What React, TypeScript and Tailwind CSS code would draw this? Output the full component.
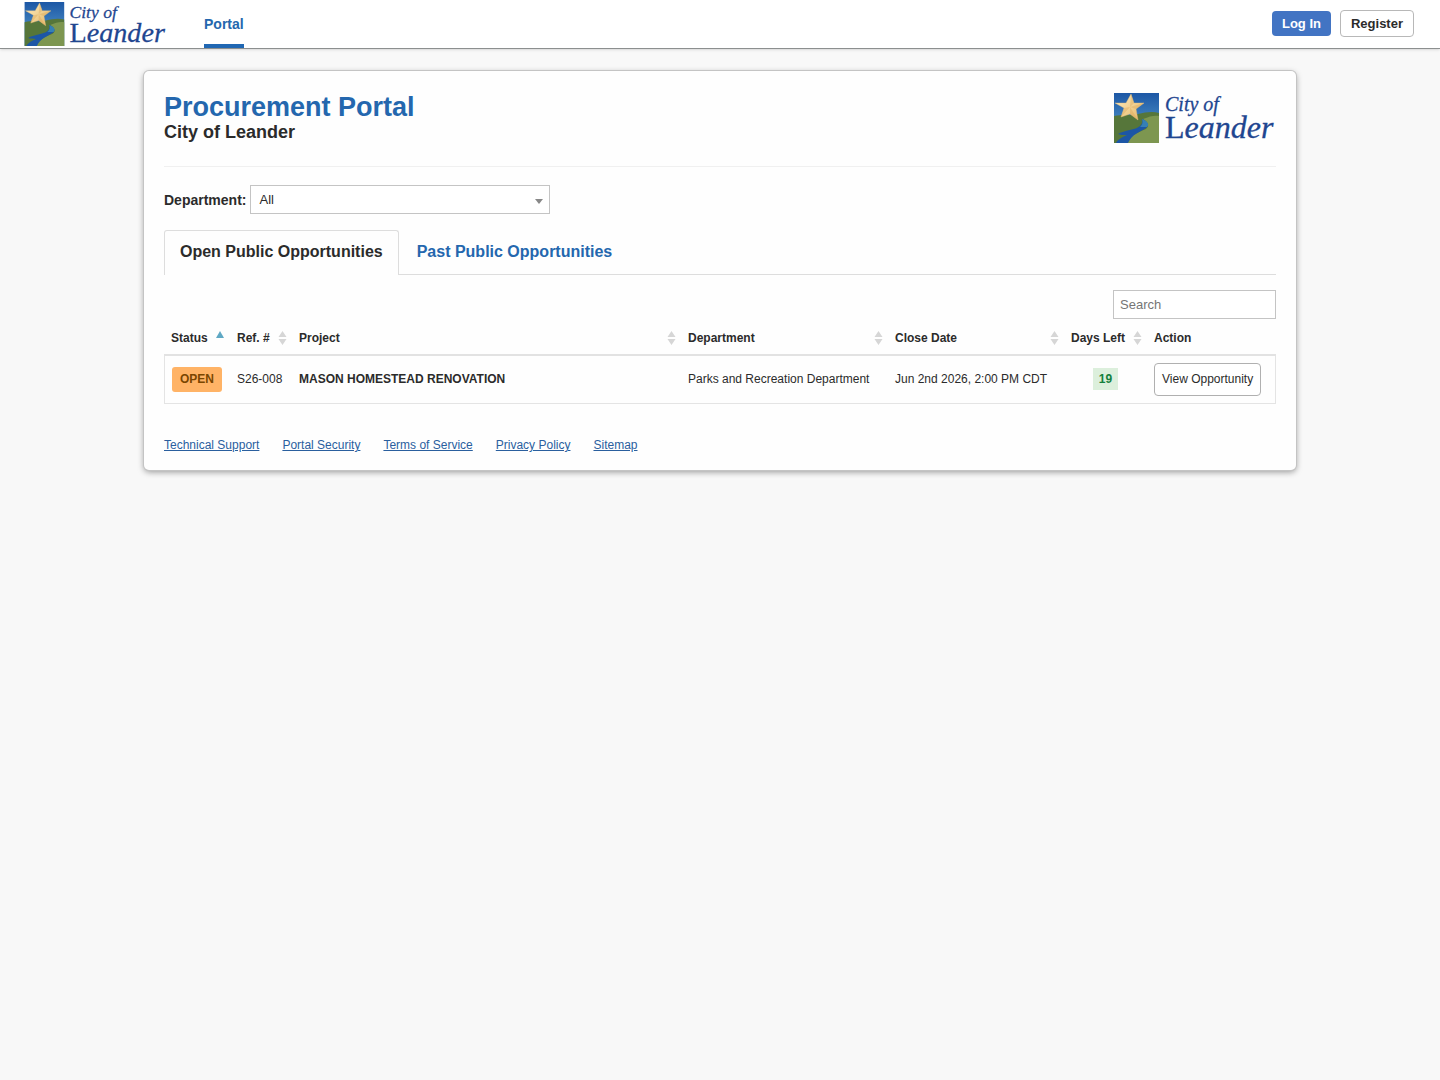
import { useId, useState } from 'react';

const columns = [
  { label: 'Status', width: 'w-[66px]', sort: 'asc' },
  { label: 'Ref. #', width: 'w-[62px]', sort: 'both' },
  { label: 'Project', width: '', sort: 'both' },
  { label: 'Department', width: 'w-[207px]', sort: 'both' },
  { label: 'Close Date', width: 'w-[176px]', sort: 'both' },
  { label: 'Days Left', width: 'w-[83px]', sort: 'both' },
  { label: 'Action', width: 'w-[129px]', sort: 'none' },
];

const opportunities = [
  {
    status: 'OPEN',
    ref: 'S26-008',
    project: 'MASON HOMESTEAD RENOVATION',
    department: 'Parks and Recreation Department',
    closeDate: 'Jun 2nd 2026, 2:00 PM CDT',
    daysLeft: 19,
  },
];

const footerLinks = ['Technical Support', 'Portal Security', 'Terms of Service', 'Privacy Policy', 'Sitemap'];

function Logo({ className }: { className: string }) {
  const id = useId();
  return (
    <svg viewBox="0 0 160 50" className={`overflow-visible ${className}`} role="img" aria-label="City of Leander">
      <defs>
        <linearGradient id={`${id}sky`} x1="0" y1="0" x2="0" y2="1">
          <stop offset="0" stopColor="#1c57a5" />
          <stop offset="0.5" stopColor="#3f80bd" />
        </linearGradient>
        <linearGradient id={`${id}star`} x1="0" y1="0" x2="1" y2="1">
          <stop offset="0" stopColor="#fdeec2" />
          <stop offset="1" stopColor="#e6b565" />
        </linearGradient>
      </defs>
      <rect width="45" height="50" fill={`url(#${id}sky)`} />
      <path d="M0 23 C8 21 16 23 24 21 C32 19 39 18 45 20 V50 H0 Z" fill="#56763a" />
      <path d="M29 26 C36 23 41 22 45 23 V50 H12 C16 43 22 40 32 36 C36 33 34 29 29 26 Z" fill="#7d9650" />
      <path
        d="M28 26 C33 28 36 32 32 35 C26 39 18 41 14 50 H2 C4 46 9 44 13 42 C10 42 6 42 4 41 C10 37 22 37 26 33 C28 31 29 29 28 26 Z"
        fill="#1c56a6"
      />
      <path d="M28 26 C33 28 36 31 33 34 L26 34 C29 31 29 29 28 26 Z" fill="#3580b5" />
      <path
        d="M17 1 L20 10 L30 10 L22 16 L24 27 L16 21 L7 24 L10 15 L1 10 L12 10 Z"
        fill={`url(#${id}star)`}
        stroke="#e6bd7a"
        strokeWidth="0.4"
      />
      <path
        d="M17 1 L16 14 L20 10 Z M30 10 L16 14 L22 16 Z M24 27 L16 14 L16 21 Z M7 24 L16 14 L10 15 Z"
        fill="#d39a4a"
        opacity="0.3"
      />
      <g fill="#1f4690" stroke="#1f4690" strokeWidth="0.3" fontFamily="'Liberation Serif', 'Times New Roman', serif">
        <text x="51" y="18" fontSize="20" fontStyle="italic">
          City of
        </text>
        <text x="51" y="45" fontSize="32">
          L
          <tspan fontStyle="italic">eander</tspan>
        </text>
      </g>
    </svg>
  );
}

function SortIcon({ sort }: { sort: string }) {
  if (sort === 'none') return null;
  if (sort === 'asc') {
    return (
      <svg viewBox="0 0 9 16" className="h-4 w-[9px] shrink-0" aria-hidden="true">
        <path d="M4 1 L8 8 H0 Z" fill="#5fa8c4" />
      </svg>
    );
  }
  return (
    <svg viewBox="0 0 9 16" className="h-4 w-[9px] shrink-0" aria-hidden="true">
      <path d="M4.500 1 L8.500 7 H0.500 Z M4.500 15 L8.500 9 H0.500 Z" fill="#d6d6d6" />
    </svg>
  );
}

export default function App() {
  const [tab, setTab] = useState('open');
  const [search, setSearch] = useState('');
  const rows = tab === 'open' ? opportunities.filter((o) => o.project.toLowerCase().includes(search.toLowerCase())) : [];

  return (
    <div className="min-h-screen bg-[#f8f8f8] pb-8 font-['Liberation_Sans',Arial,sans-serif] text-[#2b2b2b]">
      <header className="flex h-[49px] items-center justify-between border-b border-[#8c8f8f] bg-white pr-[26px] pl-6 shadow-sm">
        <div className="flex h-full items-center">
          <a href="#home">
            <Logo className="h-11 w-[142px]" />
          </a>
          <nav className="ml-[38px] h-full">
            <a href="#portal" className="flex h-full items-center border-b-4 border-[#2067b3] pt-1 text-sm font-bold text-[#2467ae]">
              Portal
            </a>
          </nav>
        </div>
        <div className="flex items-center gap-[9px] pb-[2px]">
          <button className="h-[25px] rounded bg-[#4274c3] px-[10px] pt-px text-[13px] font-bold text-white">Log In</button>
          <button className="h-[27px] rounded border border-[#b8b8b8] bg-white px-[10px] pt-px text-[13px] font-bold">Register</button>
        </div>
      </header>

      <main className="mx-auto mt-[22px] w-4/5 rounded-[5px] bg-[#fefefe] px-5 pt-[22px] pb-4 shadow-[0_2px_6px_rgba(0,0,0,0.4)] ring-1 ring-[#c4c4c4]">
        <div className="flex items-start justify-between">
          <div>
            <h1 className="text-[27px] leading-7 font-bold text-[#2467ae]">Procurement Portal</h1>
            <p className="text-lg leading-[22px] font-bold">City of Leander</p>
          </div>
          <Logo className="mr-[2px] h-[50px] w-[160px]" />
        </div>
        <hr className="mt-[23px] border-[#f0f0f0]" />

        <div className="mt-[18px] flex items-center gap-1">
          <label htmlFor="department" className="text-sm font-bold">
            Department:
          </label>
          <div className="relative">
            <select id="department" className="block h-[29px] w-[300px] appearance-none border border-[#c4c4c4] bg-white px-2 text-[13px]">
              <option>All</option>
            </select>
            <svg viewBox="0 0 8 5" className="pointer-events-none absolute right-[7px] bottom-[10px] h-[5px] w-2" aria-hidden="true">
              <path d="M0 0 H8 L4 5 Z" fill="#888888" />
            </svg>
          </div>
        </div>

        <div role="tablist" className="mt-4 flex border-b border-[#dddddd] text-base font-bold">
          <button
            role="tab"
            aria-selected={tab === 'open'}
            onClick={() => setTab('open')}
            className="-mb-px h-[45px] rounded-t-[3px] border border-b-0 border-[#dddddd] bg-[#fefefe] px-[15px] pb-[3px]"
          >
            Open Public Opportunities
          </button>
          <button
            role="tab"
            aria-selected={tab === 'past'}
            onClick={() => setTab('past')}
            className="h-[44px] px-[18px] text-[#2467ae]"
          >
            Past Public Opportunities
          </button>
        </div>

        <div className="mt-[15px] flex justify-end">
          <input
            type="search"
            aria-label="Search"
            placeholder="Search"
            value={search}
            onChange={(e) => setSearch(e.target.value)}
            className="h-[29px] w-[163px] border border-[#c4c4c4] bg-white px-[6px] text-[13px] placeholder:text-[#757575]"
          />
        </div>

        <table className="w-full table-fixed border-separate border-spacing-0 text-left text-xs">
          <thead>
            <tr>
              {columns.map((column) => (
                <th key={column.label} scope="col" className={`h-[37px] border-b-2 border-[#e2e2e2] pt-[3px] pr-[5px] pb-0 pl-[7px] font-bold ${column.width}`}>
                  <div className="flex items-center justify-between whitespace-nowrap">
                    {column.label}
                    <SortIcon sort={column.sort} />
                  </div>
                </th>
              ))}
            </tr>
          </thead>
          <tbody>
            {rows.map((row) => (
              <tr key={row.ref} className="h-[48px] *:border-b *:border-[#e4e4e4]">
                <td className="border-l pl-[7px]">
                  <span className="inline-block rounded-[3px] bg-[#ffb366] px-2 leading-[25px] font-bold text-[#7a4600]">{row.status}</span>
                </td>
                <td className="pb-[2px] pl-[7px]">{row.ref}</td>
                <td className="pb-[2px] pl-[7px] font-bold">{row.project}</td>
                <td className="pb-[2px] pl-[7px]">{row.department}</td>
                <td className="pb-[2px] pl-[7px]">{row.closeDate}</td>
                <td className="pb-[2px] text-center">
                  <span className="inline-block bg-[#dcefdc] px-[6px] leading-[22px] font-bold text-[#14803c]">{row.daysLeft}</span>
                </td>
                <td className="border-r pl-[7px]">
                  <button className="h-[33px] rounded border border-[#b0b0b0] bg-white px-[7px] pb-[2px]">View Opportunity</button>
                </td>
              </tr>
            ))}
          </tbody>
        </table>

        <footer className="mt-8 flex gap-[23px] text-xs leading-[18px]">
          {footerLinks.map((link) => (
            <a key={link} href="#footer" className="text-[#2a5f9e] underline">
              {link}
            </a>
          ))}
        </footer>
      </main>
    </div>
  );
}
